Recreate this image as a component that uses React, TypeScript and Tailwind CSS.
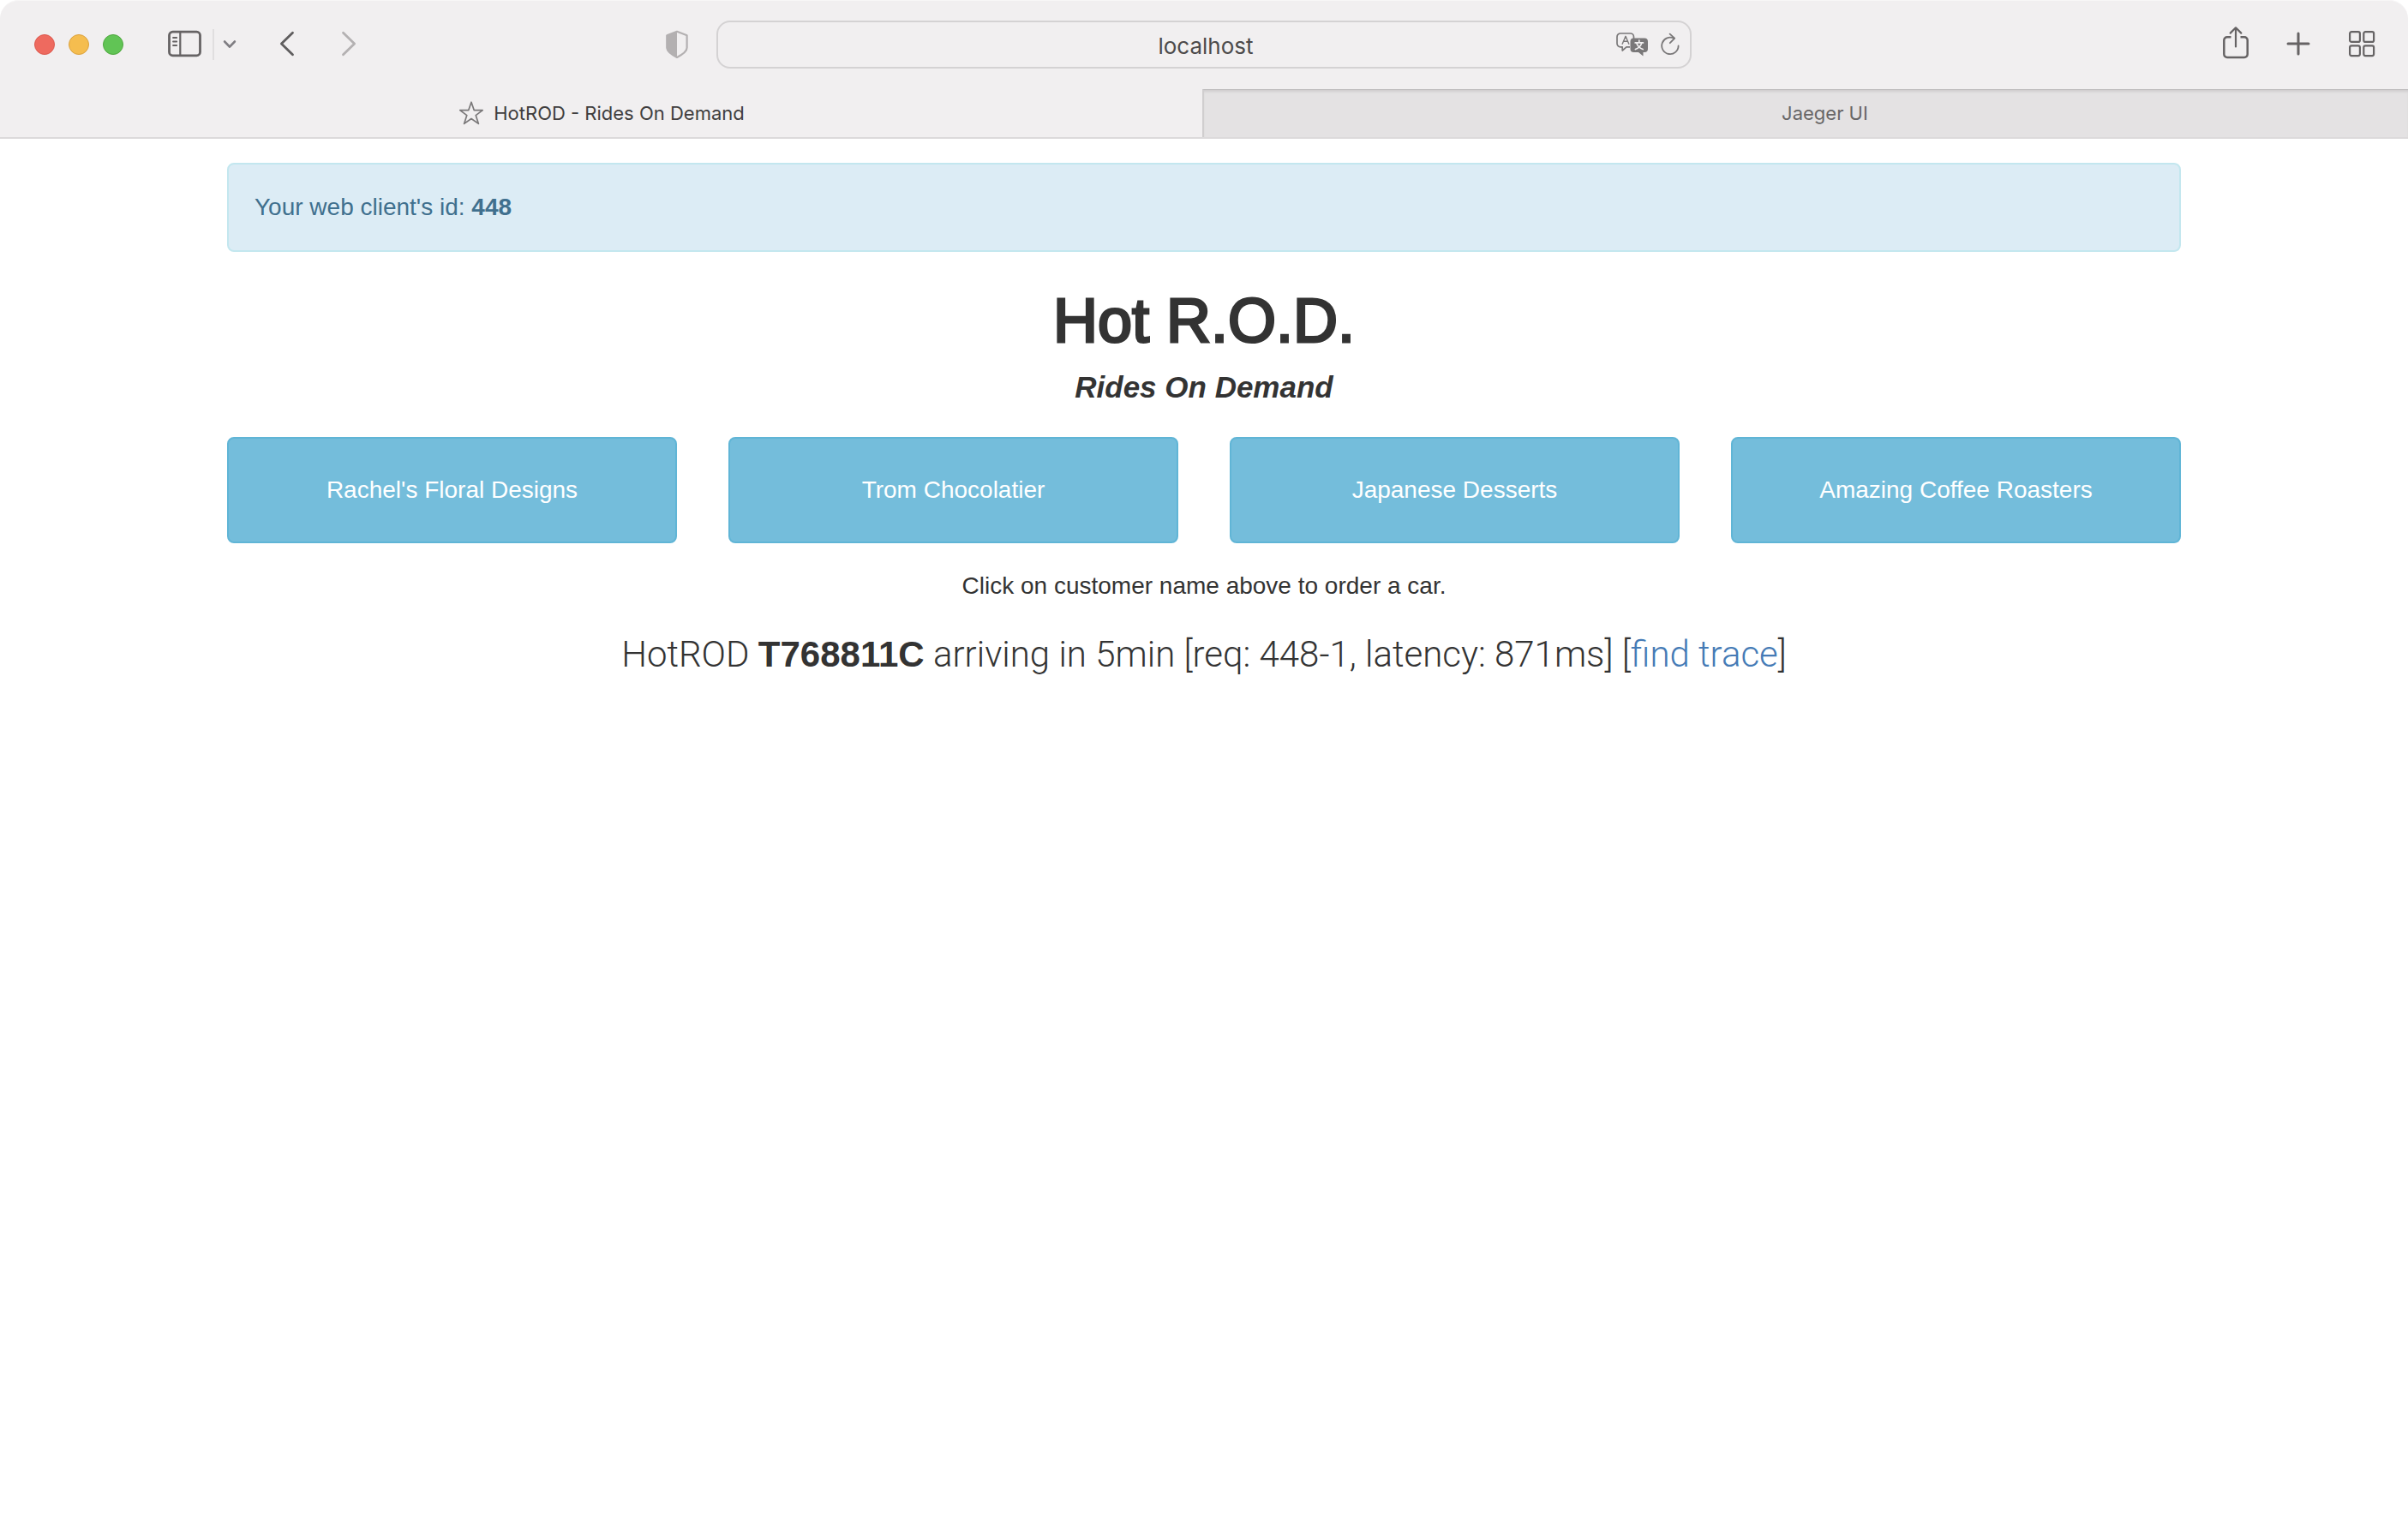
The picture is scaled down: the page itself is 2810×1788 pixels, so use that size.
import React from "react";

const customers = [
  "Rachel's Floral Designs",
  "Trom Chocolatier",
  "Japanese Desserts",
  "Amazing Coffee Roasters",
];

function SidebarIcon() {
  return (
    <svg width="40" height="34" viewBox="0 0 40 34" fill="none" stroke="#666364" strokeLinecap="round">
      <rect x="1.5" y="2.2" width="36" height="27.6" rx="4" strokeWidth="2.8" />
      <path d="M14.3 2.5v27" strokeWidth="2.2" strokeLinecap="butt" />
      <path d="M6 9h4.2M6 13.5h4.2M6 18h4.2" strokeWidth="1.8" />
    </svg>
  );
}

function ChevronDownIcon() {
  return (
    <svg width="16" height="12" viewBox="0 0 16 12" fill="none" stroke="#7f7d82" strokeWidth="2.8" strokeLinecap="round" strokeLinejoin="round">
      <path d="M2.2 2.6 8 8.6l5.8-6" />
    </svg>
  );
}

function BackIcon() {
  return (
    <svg width="18" height="32" viewBox="0 0 18 32" fill="none" stroke="#5f5d5e" strokeWidth="2.8" strokeLinecap="round" strokeLinejoin="round">
      <path d="M15.5 2.2 2.4 15l13.1 12.8" />
    </svg>
  );
}

function ForwardIcon() {
  return (
    <svg width="18" height="32" viewBox="0 0 18 32" fill="none" stroke="#b4b1b2" strokeWidth="2.8" strokeLinecap="round" strokeLinejoin="round">
      <path d="M2.5 2.2 15.6 15 2.5 27.8" />
    </svg>
  );
}

function ShieldIcon() {
  return (
    <svg width="28" height="34" viewBox="0 0 28 34">
      <path d="M14 1.8 25.6 6.2v14.6c0 4-4.4 7.4-11.6 11.2C6.8 28.2 2.4 24.8 2.4 20.8V6.2Z" fill="none" stroke="#b3b0b1" strokeWidth="2.2" strokeLinejoin="round" />
      <path d="M14 1.8V32C6.4 28.2 1.6 24.8 1.6 20.8V6.2Z" fill="#b3b0b1" />
    </svg>
  );
}

function TranslateIcon() {
  return (
    <svg width="38" height="28" viewBox="0 0 38 28" fill="none">
      <path
        d="M16 16.8H12L7.2 21v-4.2H5a4 4 0 0 1-4-4V5a4 4 0 0 1 4-4h11.5a4 4 0 0 1 4 4v2"
        stroke="#7a7879"
        strokeWidth="1.7"
        strokeLinejoin="round"
      />
      <path d="M7.2 13.3 11 4.3l3.8 9M8.5 10.3h5" stroke="#7a7879" strokeWidth="1.4" strokeLinecap="round" strokeLinejoin="round" />
      <path d="M20.5 6.5H33a4 4 0 0 1 4 4V19a4 4 0 0 1-4 4h-1.5v4.500L26 23h-5.500a4 4 0 0 1-4-4v-8.500a4 4 0 0 1 4-4Z" fill="#7a7879" />
      <path d="M26.8 9v2.800M22.200 11.900h9.300M23.800 12.200c1.200 3.600 3.800 6 7.400 7.300M29.800 12.200c-1.200 3.600-3.800 6-7.400 7.300" stroke="#f1eff0" strokeWidth="1.7" strokeLinecap="round" />
    </svg>
  );
}

function ReloadIcon() {
  return (
    <svg width="22" height="28" viewBox="0 0 22 28" fill="none" stroke="#7a7879" strokeWidth="1.8" strokeLinecap="round" strokeLinejoin="round">
      <path d="M20.600 15.500A9.700 9.700 0 1 1 15.500 6.900" />
      <path d="M10.600 1.600 16.200 6.600 10.800 12.200" />
    </svg>
  );
}

function ShareIcon() {
  return (
    <svg width="30" height="44" viewBox="0 0 30 44" fill="none" stroke="#666364" strokeLinecap="round" strokeLinejoin="round">
      <path d="M9.500 13.200H5a3.700 3.700 0 0 0-3.700 3.700v16.400A3.700 3.700 0 0 0 5 37h20a3.700 3.700 0 0 0 3.700-3.700V16.900a3.700 3.700 0 0 0-3.700-3.700h-4.500" strokeWidth="2.5" strokeLinecap="butt" />
      <path d="M15 24.500V2.500M8.700 8.600 15 2.300l6.300 6.300" strokeWidth="2.2" />
    </svg>
  );
}

function PlusIcon() {
  return (
    <svg width="28" height="30" viewBox="0 0 28 30" fill="none" stroke="#666364" strokeWidth="3" strokeLinecap="round">
      <path d="M14 2v24M2 14h24" />
    </svg>
  );
}

function GridIcon() {
  return (
    <svg width="32" height="34" viewBox="0 0 32 34" fill="none" stroke="#666364" strokeWidth="2.2">
      <rect x="2.1" y="2.1" width="11.8" height="11.8" rx="2" />
      <rect x="18.3" y="2.1" width="11.8" height="11.8" rx="2" />
      <rect x="2.1" y="18.3" width="11.8" height="11.8" rx="2" />
      <rect x="18.3" y="18.3" width="11.8" height="11.8" rx="2" />
    </svg>
  );
}

function StarIcon() {
  return (
    <svg width="28" height="28" viewBox="0 0 28 28" fill="none" stroke="#7a7879" strokeWidth="1.7" strokeLinejoin="round">
      <path d="M14 1.200 17.200 10.600H27.200L19.200 16.600 22.400 26.400 14 20.500 5.600 26.400 8.800 16.600.8 10.600H10.800Z" />
    </svg>
  );
}

function Toolbar() {
  return (
    <div className="grid h-[104px] grid-cols-[1fr_minmax(0,1138px)_1fr] items-center">
      <div className="flex items-center pr-8 pl-10">
        <div className="flex gap-4">
          <button aria-label="Close" className="size-6 rounded-full border border-[#dc5a4f] bg-[#ee6a5f]" />
          <button aria-label="Minimize" className="size-6 rounded-full border border-[#dba23f] bg-[#f5bd4f]" />
          <button aria-label="Zoom" className="size-6 rounded-full border border-[#4fa73f] bg-[#61c455]" />
        </div>
        <button aria-label="Show sidebar" className="ml-[52px]"><SidebarIcon /></button>
        <span className="ml-3 h-9 w-0.5 bg-[#e0dedf]" />
        <button aria-label="Tab groups" className="ml-2.5"><ChevronDownIcon /></button>
        <button aria-label="Back" className="ml-[50px]"><BackIcon /></button>
        <button aria-label="Forward" className="ml-[54px]"><ForwardIcon /></button>
        <button aria-label="Privacy report" className="ml-auto"><ShieldIcon /></button>
      </div>
      <div className="relative">
        <input
          aria-label="Address"
          defaultValue="localhost"
          className="block h-14 w-full rounded-2xl border-2 border-[#d4d2d3] bg-transparent pt-0.5 pl-1 text-center text-[26px] text-[#4c4a4b] outline-none"
        />
        <div className="absolute inset-y-0 right-3.5 flex items-center gap-3.5">
          <button aria-label="Translate"><TranslateIcon /></button>
          <button aria-label="Reload"><ReloadIcon /></button>
        </div>
      </div>
      <div className="flex items-center justify-end pr-[38px]">
        <button aria-label="Share"><ShareIcon /></button>
        <button aria-label="New tab" className="ml-11"><PlusIcon /></button>
        <button aria-label="Tab overview" className="ml-11"><GridIcon /></button>
      </div>
    </div>
  );
}

function TabBar() {
  return (
    <div role="tablist" className="grid h-14 grid-cols-2 text-[22px]">
      <button role="tab" aria-selected="true" className="flex items-center justify-center gap-3 text-[#403e3f]">
        <StarIcon />
        HotROD - Rides On Demand
      </button>
      <button
        role="tab"
        aria-selected="false"
        className="-ml-0.5 border-t border-l-2 border-t-[#bfbdbe] border-l-[#d0cecf] bg-[#e4e2e3] pl-11 text-[#686667] shadow-[inset_0_3px_3px_-1px_#cfcdce]"
      >
        Jaeger UI
      </button>
    </div>
  );
}

export default function App() {
  return (
    <div className="min-h-screen bg-white">
      <header className="rounded-t-[22px] border-b-2 border-[#dcdadb] bg-[#f1eff0] font-['Inter',sans-serif] shadow-[inset_0_2px_0_-1px_#f8f7f7]">
        <Toolbar />
        <TabBar />
      </header>
      <main className="mx-auto max-w-[2340px] px-[30px] pt-7 text-center font-['Liberation_Sans',Arial,sans-serif] text-[28px] leading-10 text-[#333333]">
        <div className="rounded-lg border-2 border-[#c3e7ef] bg-[#dcecf5] p-[30px] text-left text-[#40708e]">
          Your web client's id: <strong>448</strong>
        </div>
        <h1 className="mt-10 text-[72px] leading-[80px] font-normal [-webkit-text-stroke:3px_#333333]">Hot R.O.D.</h1>
        <h4 className="mt-[18px] text-[35px] leading-10 font-bold italic">Rides On Demand</h4>
        <div className="mt-[38px] grid grid-cols-4 gap-[60px]">
          {customers.map((name) => (
            <button key={name} className="h-[124px] rounded-lg border-2 border-[#60b5d6] bg-[#74bddb] text-white">
              {name}
            </button>
          ))}
        </div>
        <p className="mt-[30px]">Click on customer name above to order a car.</p>
        <p className="mt-[30px] font-['Roboto',sans-serif] text-[42px] leading-[60px] font-light">
          HotROD <strong className="font-['Liberation_Sans',Arial,sans-serif] font-bold">T768811C</strong> arriving in 5min [req: 448-1, latency: 871ms] [
          <a href="#trace" className="text-[#457bb6]">find trace</a>]
        </p>
      </main>
    </div>
  );
}
